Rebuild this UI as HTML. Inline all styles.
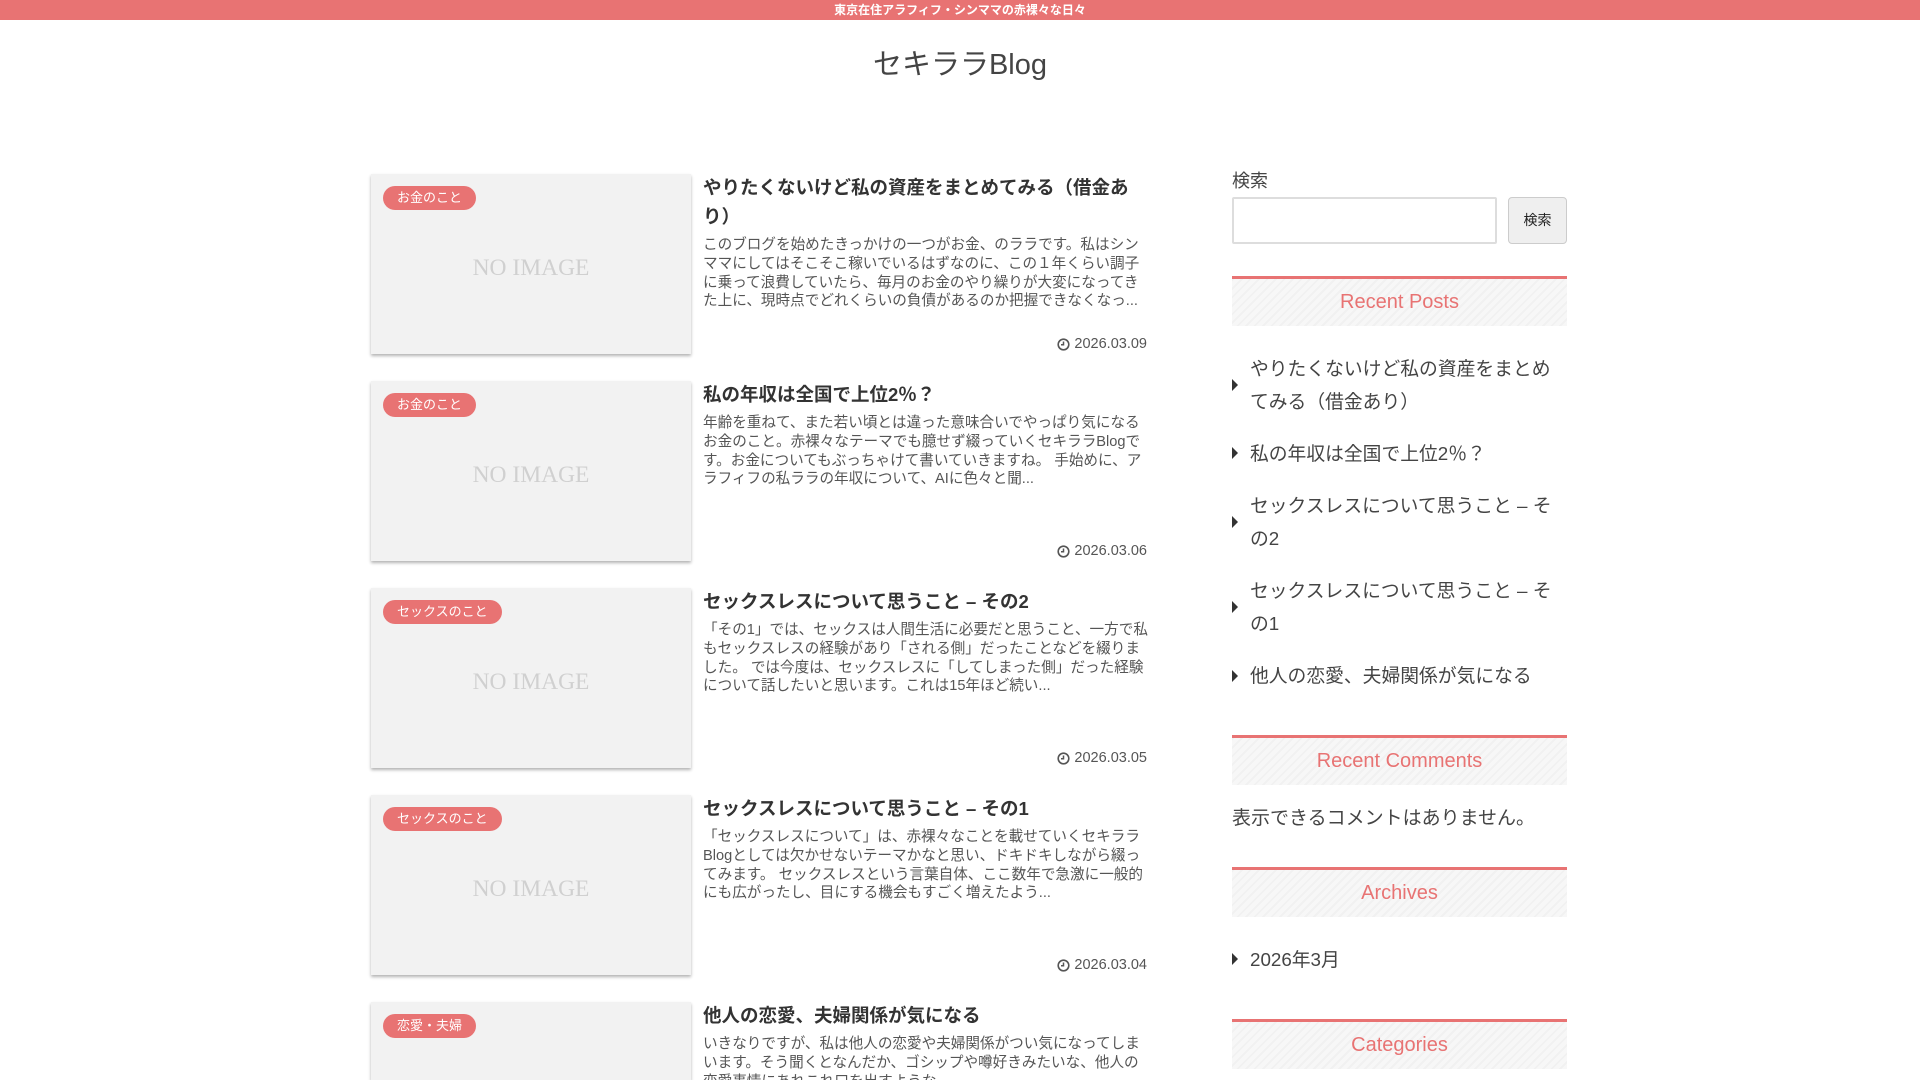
<!DOCTYPE html>
<html style="width:1920px;height:1080px;overflow:hidden"><head><meta charset="utf-8"><style>
*{margin:0;padding:0;box-sizing:border-box}
body{width:1920px;height:1080px;overflow:hidden;background:#fff;font-family:"Liberation Sans","Noto Sans CJK JP",sans-serif;color:#333;position:relative}
.bar{position:absolute;left:0;top:0;width:1920px;height:20px;background:#e87373;color:#fff;font-size:12px;font-weight:bold;text-align:center;line-height:20px}
.logo{position:absolute;left:0;width:1920px;top:41px;text-align:center;font-size:29px;color:#444}
.card{position:absolute;left:371px;width:320px;height:180px;background:#f2f2f2;box-shadow:0 2px 3px rgba(0,0,0,.3);overflow:hidden}
.noimg{position:absolute;left:0;right:0;top:81px;text-align:center;font-family:"Liberation Serif",serif;font-size:23.5px;color:#d0d0d0}
.cat{position:absolute;left:12px;top:12px;height:24px;line-height:24px;padding:0 14px;border-radius:12px;background:#e87373;color:#fff;font-size:13px}
.t{position:absolute;left:703px;width:432px;font-size:18.5px;font-weight:bold;line-height:29px;color:#333}
.ex{position:absolute;left:703px;width:450px;font-size:14.6px;line-height:18.8px;color:#555}
.d{position:absolute;right:773px;font-size:14.5px;color:#555;display:flex;align-items:center;gap:4px}
.side{position:absolute;left:1232px;width:335px}
.wh{position:absolute;left:1232px;width:335px;height:50px;border-top:3px solid #e87373;background:repeating-linear-gradient(-45deg,#f7f7f7 0 4px,#f1f1f1 4px 6px);color:#e87373;font-size:20px;text-align:center;line-height:46px}
.li{position:absolute;left:1250px;width:318px;font-size:18.8px;line-height:33px;color:#444}
.ar{position:absolute;left:1232px;width:0;height:0;border-left:6px solid #333;border-top:6px solid transparent;border-bottom:6px solid transparent}
</style></head><body>
<div class="bar">東京在住アラフィフ・シンママの赤裸々な日々</div>
<div class="logo">セキララBlog</div>

<div class="card" style="top:174px"><div class="noimg">NO IMAGE</div><div class="cat">お金のこと</div></div>
<div class="t" style="top:173px">やりたくないけど私の資産をまとめてみる（借金あり）</div>
<div class="ex" style="top:236px">このブログを始めたきっかけの一つがお金、のララです。私はシンママにしてはそこそこ稼いでいるはずなのに、この１年くらい調子に乗って浪費していたら、毎月のお金のやり繰りが大変になってきた上に、現時点でどれくらいの負債があるのか把握できなくなっ...</div>
<div class="d" style="top:336px"><svg width="13" height="13" viewBox="0 0 13 13"><circle cx="6.5" cy="6.5" r="5.3" fill="none" stroke="#555" stroke-width="1.6"/><path d="M6.5 3.5V6.8H4" fill="none" stroke="#555" stroke-width="1.5"/></svg>2026.03.09</div>

<div class="card" style="top:381px"><div class="noimg">NO IMAGE</div><div class="cat">お金のこと</div></div>
<div class="t" style="top:380px">私の年収は全国で上位2％？</div>
<div class="ex" style="top:414px">年齢を重ねて、また若い頃とは違った意味合いでやっぱり気になるお金のこと。赤裸々なテーマでも臆せず綴っていくセキララBlogです。お金についてもぶっちゃけて書いていきますね。 手始めに、アラフィフの私ララの年収について、AIに色々と聞...</div>
<div class="d" style="top:543px"><svg width="13" height="13" viewBox="0 0 13 13"><circle cx="6.5" cy="6.5" r="5.3" fill="none" stroke="#555" stroke-width="1.6"/><path d="M6.5 3.5V6.8H4" fill="none" stroke="#555" stroke-width="1.5"/></svg>2026.03.06</div>

<div class="card" style="top:588px"><div class="noimg">NO IMAGE</div><div class="cat">セックスのこと</div></div>
<div class="t" style="top:587px">セックスレスについて思うこと – その2</div>
<div class="ex" style="top:621px">「その1」では、セックスは人間生活に必要だと思うこと、一方で私もセックスレスの経験があり「される側」だったことなどを綴りました。 では今度は、セックスレスに「してしまった側」だった経験について話したいと思います。これは15年ほど続い...</div>
<div class="d" style="top:750px"><svg width="13" height="13" viewBox="0 0 13 13"><circle cx="6.5" cy="6.5" r="5.3" fill="none" stroke="#555" stroke-width="1.6"/><path d="M6.5 3.5V6.8H4" fill="none" stroke="#555" stroke-width="1.5"/></svg>2026.03.05</div>

<div class="card" style="top:795px"><div class="noimg">NO IMAGE</div><div class="cat">セックスのこと</div></div>
<div class="t" style="top:794px">セックスレスについて思うこと – その1</div>
<div class="ex" style="top:828px">「セックスレスについて」は、赤裸々なことを載せていくセキララBlogとしては欠かせないテーマかなと思い、ドキドキしながら綴ってみます。 セックスレスという言葉自体、ここ数年で急激に一般的にも広がったし、目にする機会もすごく増えたよう...</div>
<div class="d" style="top:957px"><svg width="13" height="13" viewBox="0 0 13 13"><circle cx="6.5" cy="6.5" r="5.3" fill="none" stroke="#555" stroke-width="1.6"/><path d="M6.5 3.5V6.8H4" fill="none" stroke="#555" stroke-width="1.5"/></svg>2026.03.04</div>

<div class="card" style="top:1002px;height:78px"><div class="cat">恋愛・夫婦</div></div>
<div class="t" style="top:1001px">他人の恋愛、夫婦関係が気になる</div>
<div class="ex" style="top:1035px">いきなりですが、私は他人の恋愛や夫婦関係がつい気になってしまいます。そう聞くとなんだか、ゴシップや噂好きみたいな、他人の恋愛事情にあれこれ口を出すような...</div>

<div class="side" style="top:167px;font-size:18px;color:#444">検索</div>
<div style="position:absolute;left:1232px;top:197px;width:265px;height:47px;border:2px solid #ddd;border-radius:2px"></div>
<div style="position:absolute;left:1508px;top:197px;width:59px;height:47px;border:1px solid #ccc;border-radius:4px;background:#efefef;font-size:14px;text-align:center;line-height:45px;color:#222">検索</div>

<div class="wh" style="top:276px">Recent Posts</div>
<div class="ar" style="top:379px"></div><div class="li" style="top:352px">やりたくないけど私の資産をまとめてみる（借金あり）</div>
<div class="ar" style="top:447px"></div><div class="li" style="top:437px">私の年収は全国で上位2％？</div>
<div class="ar" style="top:516px"></div><div class="li" style="top:489px">セックスレスについて思うこと – その2</div>
<div class="ar" style="top:601px"></div><div class="li" style="top:574px">セックスレスについて思うこと – その1</div>
<div class="ar" style="top:670px"></div><div class="li" style="top:659px">他人の恋愛、夫婦関係が気になる</div>

<div class="wh" style="top:735px">Recent Comments</div>
<div class="side" style="top:802px;font-size:19px;color:#444;line-height:33px">表示できるコメントはありません。</div>

<div class="wh" style="top:867px">Archives</div>
<div class="ar" style="top:953px"></div><div class="li" style="top:943px">2026年3月</div>

<div class="wh" style="top:1019px">Categories</div>
</body></html>
